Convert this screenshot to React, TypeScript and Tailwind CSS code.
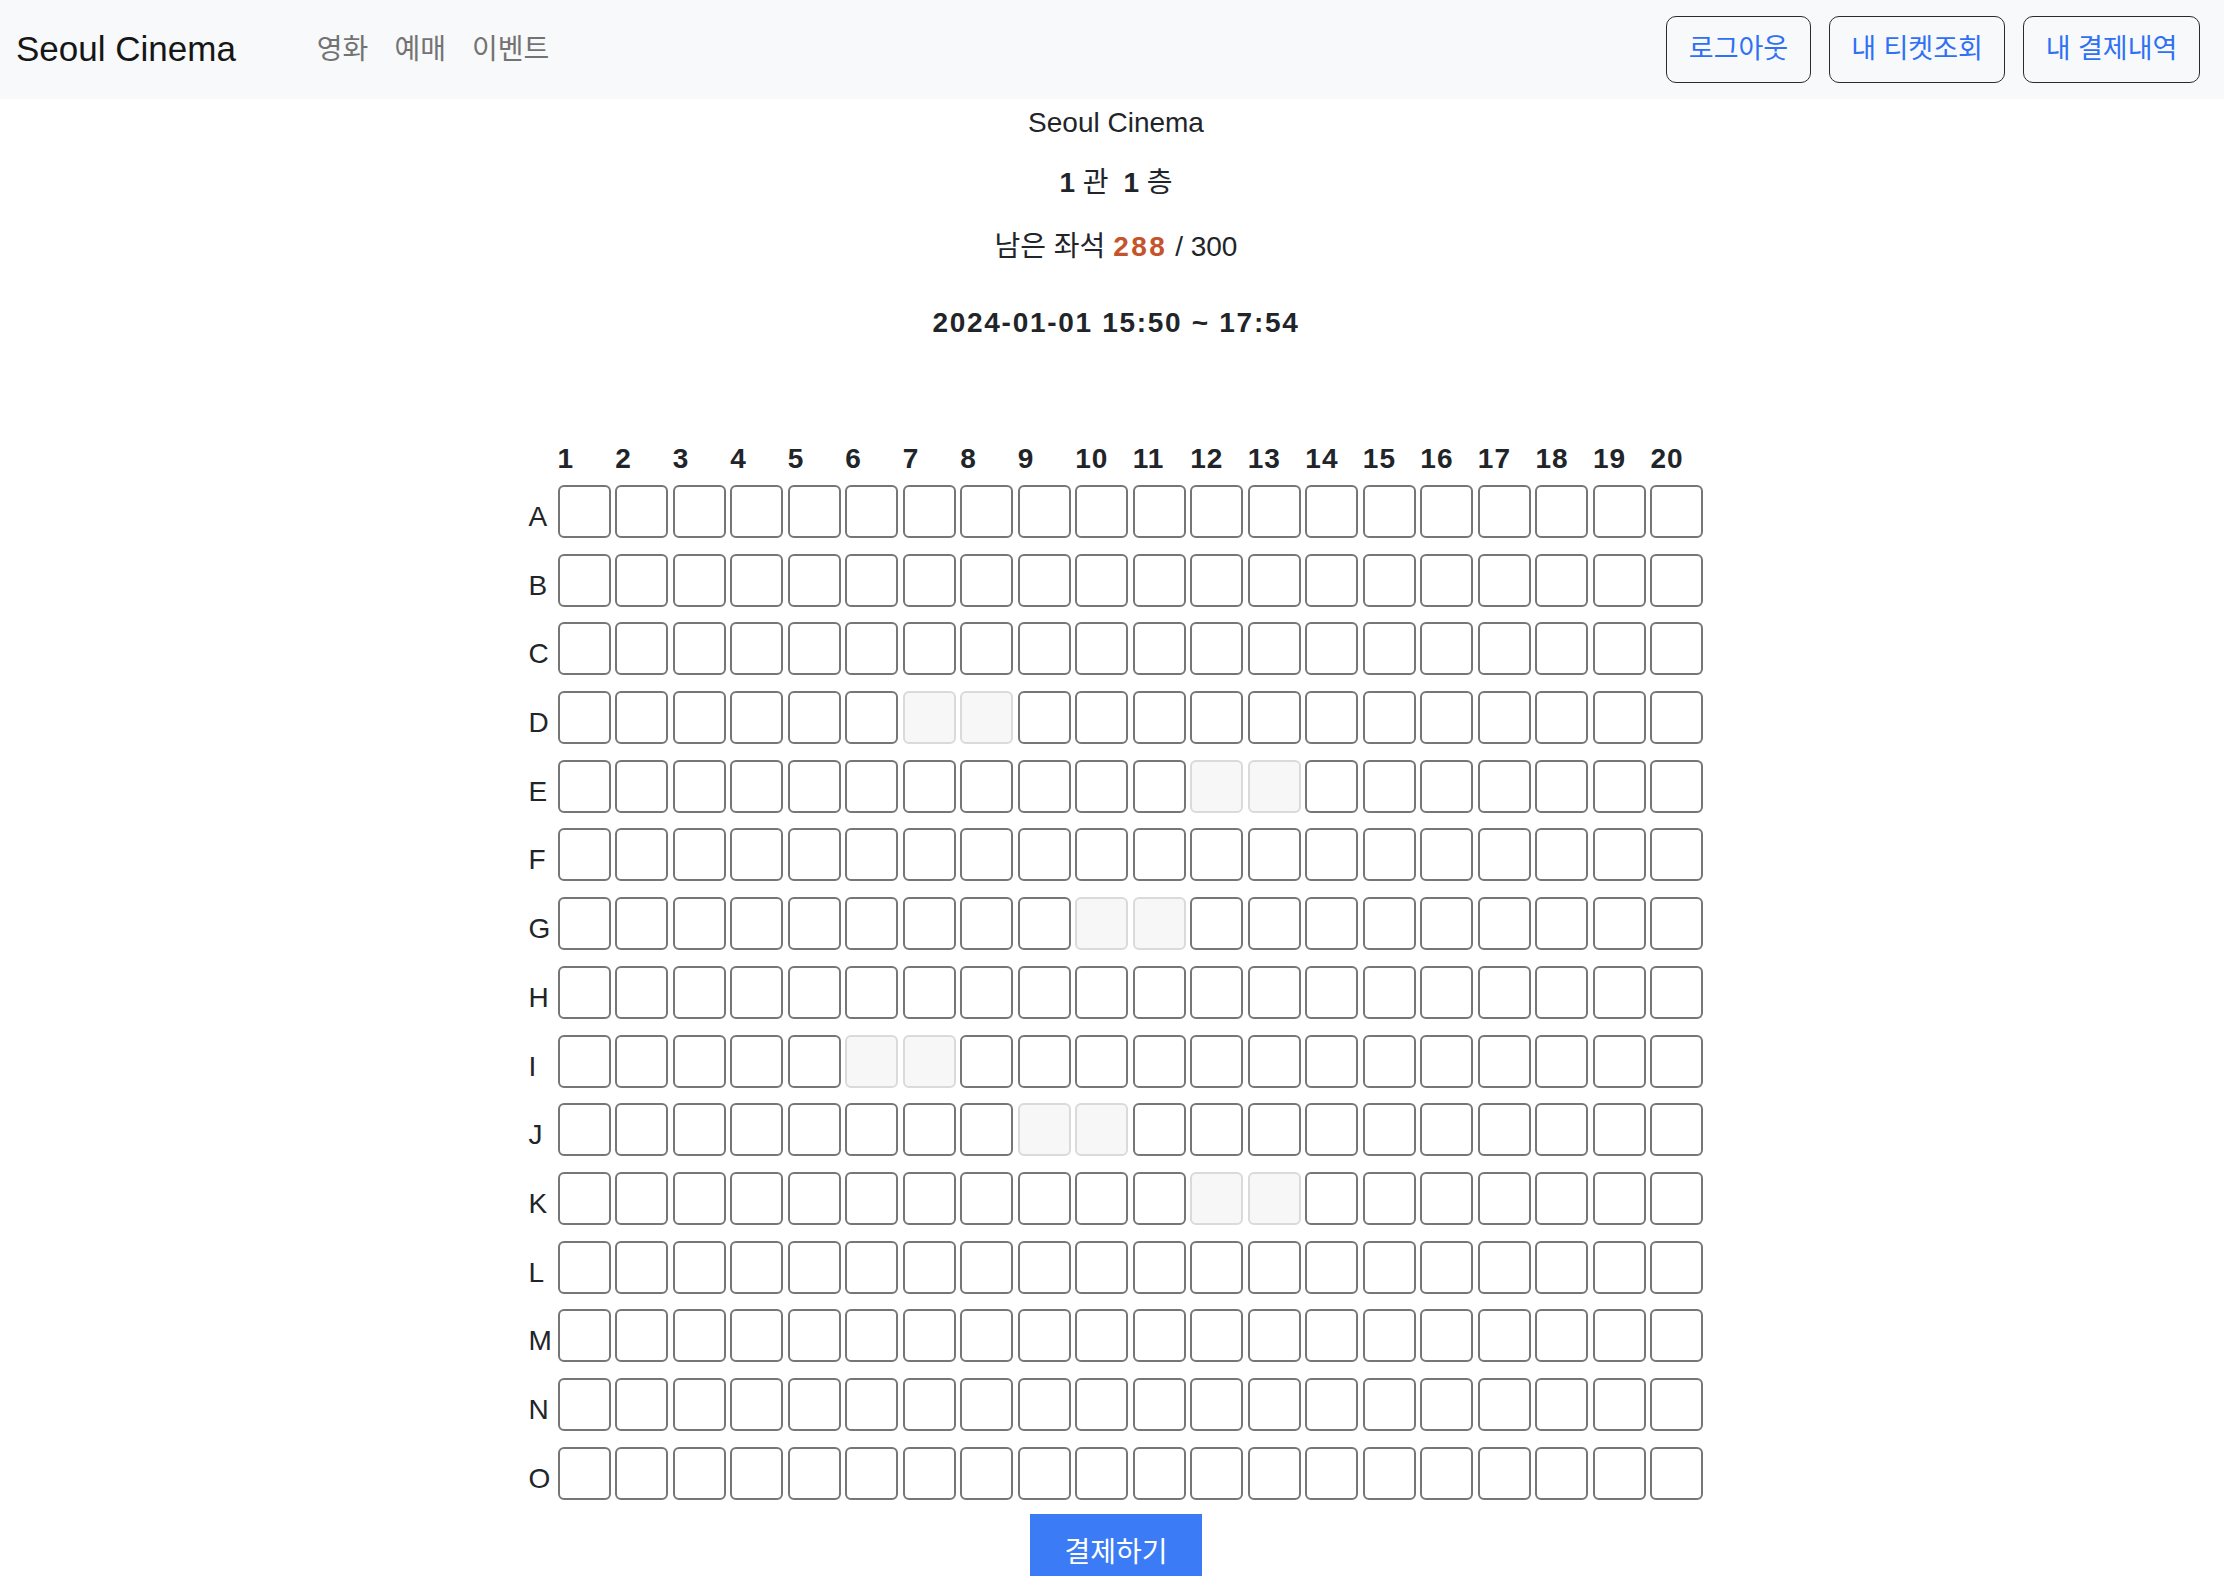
import React from "react";

const ROWS = ["A", "B", "C", "D", "E", "F", "G", "H", "I", "J", "K", "L", "M", "N", "O"];
const COLS = Array.from({ length: 20 }, (_, i) => i + 1);

// seats already sold
const TAKEN: Record<string, number[]> = {
  D: [7, 8],
  E: [12, 13],
  G: [10, 11],
  I: [6, 7],
  J: [9, 10],
  K: [12, 13],
};

function Seat({ taken }: { taken: boolean }) {
  return (
    <div
      className={`w-[53px] h-[53px] rounded-[6px] border-2 ${
        taken ? "border-[#dadada] bg-[#f7f7f7]" : "border-[#767676] bg-white"
      }`}
    />
  );
}

export default function App() {
  return (
    <div className="min-h-screen bg-white text-[#212529] font-['Liberation_Sans','Noto_Sans_CJK_KR',sans-serif]">
      <nav className="h-[99px] bg-[#f8f9fa] flex items-center pl-[16px] pr-[24px]">
        <span className="text-[35px] text-[#161616]">Seoul Cinema</span>
        <div className="ml-[68px] flex text-[28px] text-[#737373]">
          <a className="px-[13px]">영화</a>
          <a className="px-[13px]">예매</a>
          <a className="px-[13px]">이벤트</a>
        </div>
        <div className="ml-auto flex gap-[18px]">
          <button className="h-[67px] w-[145px] rounded-[10px] border-[1.5px] border-[#2b2b2b] text-[27px] text-[#2f70f5]">
            로그아웃
          </button>
          <button className="h-[67px] w-[176px] rounded-[10px] border-[1.5px] border-[#2b2b2b] text-[27px] text-[#2f70f5]">
            내 티켓조회
          </button>
          <button className="h-[67px] w-[177px] rounded-[10px] border-[1.5px] border-[#2b2b2b] text-[27px] text-[#2f70f5]">
            내 결제내역
          </button>
        </div>
      </nav>

      <main className="pl-[8px] flex flex-col items-center text-[28px] leading-[42px]">
        <p className="mt-[3px]">Seoul Cinema</p>
        <p className="mt-[18px]">
          <b>1</b> 관<b className="ml-[15px]">1</b> 층
        </p>
        <p className="mt-[22px]">
          남은 좌석 <b className="text-[#c4542b] tracking-[2.5px]">288</b> / 300
        </p>
        <p className="mt-[34px] font-bold tracking-[1.7px]">2024-01-01 15:50 ~ 17:54</p>

        <div className="mt-[94px] grid grid-cols-[24.5px_repeat(20,53px)] gap-x-[4.53px] font-bold tracking-[1px]">
          <span />
          {COLS.map((c) => (
            <span key={c}>{c}</span>
          ))}
        </div>

        <div className="mt-[5px] grid grid-cols-[24.5px_repeat(20,53px)] gap-x-[4.53px] gap-y-[15.7px]">
          {ROWS.map((r) => (
            <React.Fragment key={r}>
              <span className="self-end">{r}</span>
              {COLS.map((c) => (
                <Seat key={c} taken={(TAKEN[r] ?? []).includes(c)} />
              ))}
            </React.Fragment>
          ))}
        </div>

        <button className="mt-[14px] mb-4 w-[172px] h-[78px] bg-[#3b7cf6] text-white text-[28px]">
          결제하기
        </button>
      </main>
    </div>
  );
}
